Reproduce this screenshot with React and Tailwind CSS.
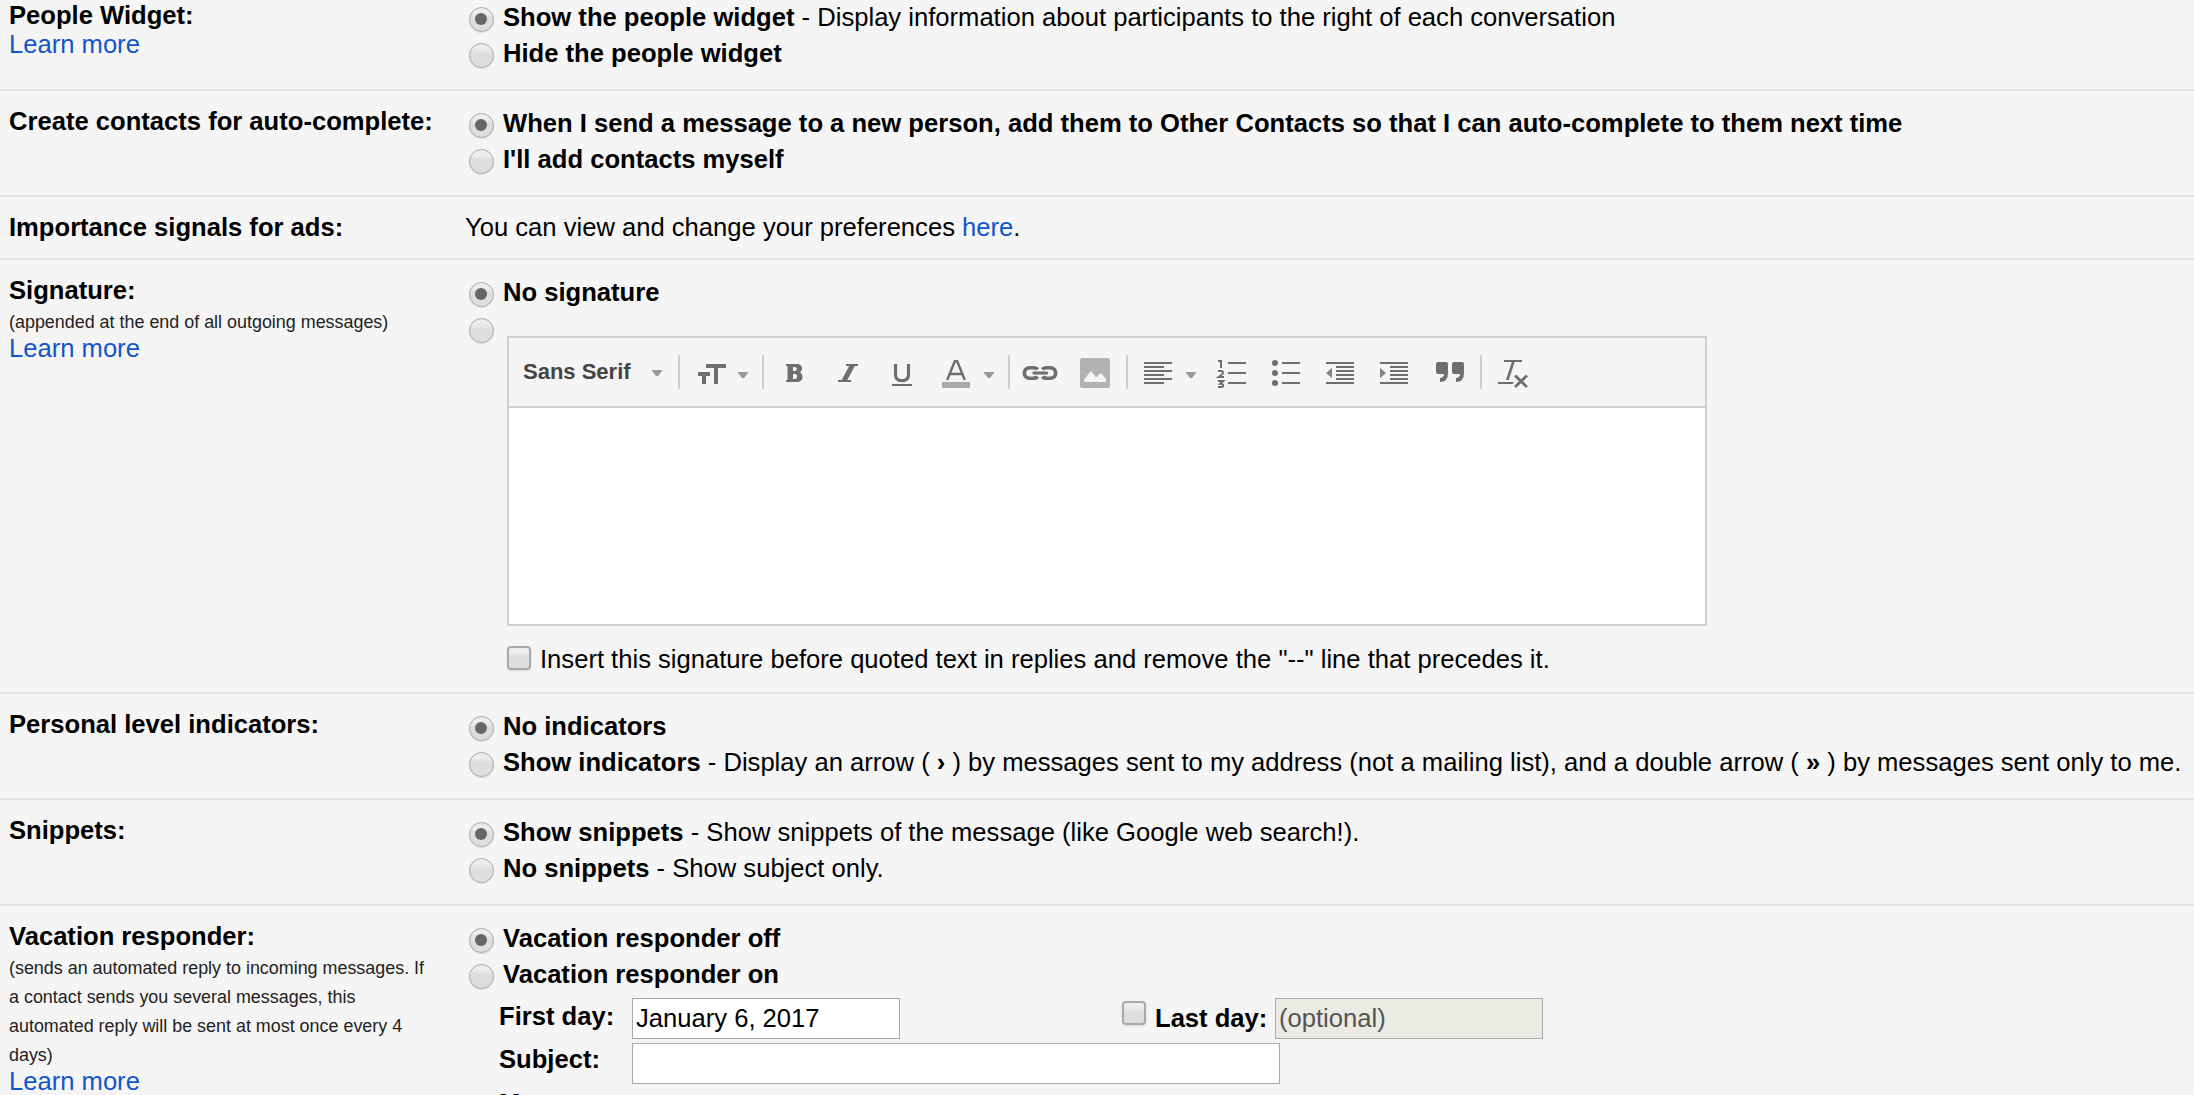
import React from "react";

const INK = "#6e6e6e";

function Radio({ checked }) {
  return (
    <span className="mt-[6px] ml-1 mr-[9px] flex h-[25px] w-[25px] shrink-0 items-center justify-center rounded-full border border-[#a9a9a9] bg-linear-to-b from-[#ededed] from-20% to-[#dedede] to-45% shadow-[0_1px_1px_#dcdcdc]">
      {checked && <span className="mr-px mb-px h-3 w-3 rounded-full bg-[#666]" />}
    </span>
  );
}

function Checkbox({ className }) {
  return (
    <span
      className={
        "block h-6 w-6 shrink-0 rounded-[4px] border-2 border-[#a9a9a9] bg-linear-to-b from-[#eee] from-15% to-[#dedede] to-45% shadow-[0_1px_2px_#d4d4d4] " +
        (className || "")
      }
    />
  );
}

function Option({ checked, title, children }) {
  return (
    <div className="flex h-9">
      <Radio checked={checked} />
      <span className="mt-[2px] whitespace-nowrap">
        <b>{title}</b>
        {children}
      </span>
    </div>
  );
}

function Row({ title, note, learn, last, height, children }) {
  return (
    <section className={"flex shrink-0 border-[#e4e4e4] pt-4 " + (last ? "" : "border-b-2 ") + height}>
      <div className="w-[465px] shrink-0 pl-[9px]">
        <div className="font-bold">{title}</div>
        {note && <div className="relative top-[3px] w-[425px] text-[17.92px] leading-[29px] text-[#222]">{note}</div>}
        {learn && <a className="block text-[#15c]">Learn more</a>}
      </div>
      <div className="min-w-0 flex-1">{children}</div>
    </section>
  );
}

/* Toolbar tile: x is the tile's left edge, w its width; tiles sit side by side. */
function Tile({ x, w, children }) {
  return (
    <svg className="block shrink-0" width={w} height={68} viewBox={`${x} 338 ${w} 68`} fill={INK}>
      {children}
    </svg>
  );
}
const Caret = ({ x, y }) => <path fill="#999" d={`M${x} ${y}h10v1l-4 5h-2l-4-5z`} />;
const Sep = ({ x }) => <rect x={x} y="355" width="2" height="34" fill="#ccc" />;
const Lines = ({ x, w, ys }) => ys.map((y) => <rect key={y} x={x} y={y} width={w} height="2" />);

function Toolbar() {
  return (
    <div className="flex h-[70px] border-b-2 border-[#cfcfcf]">
      <span className="w-[141px] shrink-0 pt-[21px] pl-[14px] text-[22px] leading-[25px] font-bold text-[#444]">Sans Serif</span>
      <Tile x={650} w={35}>
        <Caret x={652} y={370} />
        <Sep x={678} />
      </Tile>
      <Tile x={685} w={85}>
        <path d="M698 372h12v4h-4v8h-4v-8h-4zM706 364h20v4h-8v16h-4v-16h-8z" />
        <Caret x={738} y={372} />
        <Sep x={762} />
      </Tile>
      <Tile x={770} w={50}>
        <path fillRule="evenodd" d="M786 364h10.500c4 0 5.500 1.800 5.500 4.600 0 2-1 3.400-2.500 4 2 .5 3 2 3 4.300 0 3.200-2.400 5.100-6 5.100h-10.500v-2h1.500v-14h-1.500zM793 367v4h1.700c1.300 0 2-.7 2-2s-.7-2-2-2zm0 7v5h1.900c1.400 0 2.200-1 2.200-2.500s-.8-2.500-2.200-2.500z" />
      </Tile>
      <Tile x={820} w={50}>
        <path d="M846 364h12v2h-3.200l-7.500 14h3.700v2h-13v-2h3.700l7.500-14h-3.200z" />
      </Tile>
      <Tile x={870} w={55}>
        <path d="M895.500 364v10.500c0 4 2.400 6.200 6.500 6.200s6.500-2.200 6.500-6.200v-10.500" fill="none" stroke={INK} strokeWidth="3.200" />
        <rect x="892" y="384" width="20" height="2" />
      </Tile>
      <Tile x={925} w={90}>
        <path d="M947.200 380l7.600-18.800h2.400l7.600 18.800M949.500 374h13" fill="none" stroke={INK} strokeWidth="2.400" />
        <rect x="942" y="382" width="28" height="6" fill="#aaa" />
        <Caret x={984} y={372} />
        <Sep x={1008} />
      </Tile>
      <Tile x={1015} w={55}>
        <path d="M1037.500 369.500q-1-1.700-4-1.700h-4a5.200 5.200 0 0 0 0 10.400h4q3 0 4-1.700M1042.500 369.500q1-1.700 4-1.700h4a5.200 5.200 0 0 1 0 10.400h-4q-3 0-4-1.700" fill="none" stroke={INK} strokeWidth="3.600" />
        <rect x="1032.500" y="371.500" width="15.500" height="3" rx="1" />
      </Tile>
      <Tile x={1070} w={64}>
        <rect x="1080" y="358" width="30" height="30" rx="2.500" fill="#b2b2b2" />
        <path fill="#f5f5f5" d="M1084 382v-2.500l7-8.500 5 6.500 5-4.500 5 6v3z" />
        <Sep x={1126} />
      </Tile>
      <Tile x={1134} w={70}>
        <Lines x={1144} w={28} ys={[362, 370, 378]} />
        <Lines x={1144} w={20} ys={[366, 374, 382]} />
        <Caret x={1186} y={372} />
      </Tile>
      <Tile x={1204} w={56}>
        <g fill="none" stroke={INK} strokeWidth="2">
          <path d="M1218 361h3v7" />
          <path d="M1218 371h3q2 0 2 1.700 0 1.300-4.500 4.300h5.500" />
          <path d="M1218 381h5.200l-3 2.800q3 0 3 1.700t-2.200 1.500h-3" />
        </g>
        <Lines x={1228} w={18} ys={[362, 372, 382]} />
      </Tile>
      <Tile x={1260} w={52}>
        <circle cx="1275" cy="363" r="3" />
        <circle cx="1275" cy="373" r="3" />
        <circle cx="1275" cy="383" r="3" />
        <Lines x={1282} w={18} ys={[362, 372, 382]} />
      </Tile>
      <Tile x={1312} w={54}>
        <Lines x={1326} w={28} ys={[362, 382]} />
        <Lines x={1336} w={18} ys={[366, 370, 374, 378]} />
        <path fill="#888" d="M1326 373l6-5.200v10.400z" />
      </Tile>
      <Tile x={1366} w={54}>
        <Lines x={1380} w={28} ys={[362, 382]} />
        <Lines x={1390} w={18} ys={[366, 370, 374, 378]} />
        <path fill="#888" d="M1386 373l-6-5.200v10.400z" />
      </Tile>
      <Tile x={1420} w={70}>
        <path d="M1438 362h8q2 0 2 2v9q0 9-8 9v-4q4-.3 4-4h-6q-2 0-2-2v-8q0-2 2-2zM1454 362h8q2 0 2 2v9q0 9-8 9v-4q4-.3 4-4h-6q-2 0-2-2v-8q0-2 2-2z" />
        <Sep x={1480} />
      </Tile>
      <Tile x={1490} w={50}>
        <rect x="1504" y="360" width="18" height="2" />
        <path d="M1512 361.500h2.800l-6 18.500h-2.800z" />
        <path d="M1498 382h16l-1.500 2h-14.500z" />
        <path d="M1515 375.500l12 11.500M1527 375.500l-12 11.500" stroke={INK} strokeWidth="2.800" />
      </Tile>
    </div>
  );
}

export default function App() {
  return (
    <div className="h-[1095px] w-[2194px] overflow-hidden bg-[#f5f5f5] font-['Liberation_Sans',Arial,sans-serif] text-[25.6px] leading-[29px] text-black">
      <main className="-mt-[15px] flex flex-col">
        <Row title="People Widget:" learn height="h-[106px]">
          <Option checked title="Show the people widget"> - Display information about participants to the right of each conversation</Option>
          <Option title="Hide the people widget" />
        </Row>
        <Row title="Create contacts for auto-complete:" height="h-[106px]">
          <Option checked title="When I send a message to a new person, add them to Other Contacts so that I can auto-complete to them next time" />
          <Option title="I'll add contacts myself" />
        </Row>
        <Row title="Importance signals for ads:" height="h-[63px]">
          You can view and change your preferences <a className="text-[#15c]">here</a>.
        </Row>
        <Row title="Signature:" note="(appended at the end of all outgoing messages)" learn height="h-[434px]">
          <Option checked title="No signature" />
          <div className="flex">
            <Radio />
            <div className="mt-6 ml-1 w-[1200px]">
              <div className="h-[290px] border-2 border-[#cfcfcf] bg-white">
                <div className="bg-[#f5f5f5]">
                  <Toolbar />
                </div>
              </div>
              <div className="mt-5 flex">
                <Checkbox />
                <span className="ml-[9px] -mt-px">Insert this signature before quoted text in replies and remove the "--" line that precedes it.</span>
              </div>
            </div>
          </div>
        </Row>
        <Row title="Personal level indicators:" height="h-[106px]">
          <Option checked title="No indicators" />
          <Option title="Show indicators"> - Display an arrow ( <b>›</b> ) by messages sent to my address (not a mailing list), and a double arrow ( <b>»</b> ) by messages sent only to me.</Option>
        </Row>
        <Row title="Snippets:" height="h-[106px]">
          <Option checked title="Show snippets"> - Show snippets of the message (like Google web search!).</Option>
          <Option title="No snippets"> - Show subject only.</Option>
        </Row>
        <Row
          title="Vacation responder:"
          note="(sends an automated reply to incoming messages. If a contact sends you several messages, this automated reply will be sent at most once every 4 days)"
          learn
          last
          height="h-[240px]"
        >
          <Option checked title="Vacation responder off" />
          <Option title="Vacation responder on" />
          <div className="mt-1 flex pl-[34px]">
            <b className="mt-[4px] w-[133px]">First day:</b>
            <div className="h-[41px] w-[268px] border border-[#a9a9a9] bg-white pt-[5px] pl-[3px]">January 6, 2017</div>
            <Checkbox className="mt-[3px] ml-[222px]" />
            <b className="mt-[6px] ml-[9px] w-[120px]">Last day:</b>
            <div className="h-[41px] w-[268px] border border-[#a9a9a9] bg-[#ebebe4] pt-[5px] pl-[3px] text-[#545454]">(optional)</div>
          </div>
          <div className="mt-1 flex pl-[34px]">
            <b className="mt-[2px] w-[133px]">Subject:</b>
            <div className="h-[41px] w-[648px] border border-[#a9a9a9] bg-white" />
          </div>
          <b className="mt-[5px] block pl-[34px]">Message:</b>
        </Row>
      </main>
    </div>
  );
}
